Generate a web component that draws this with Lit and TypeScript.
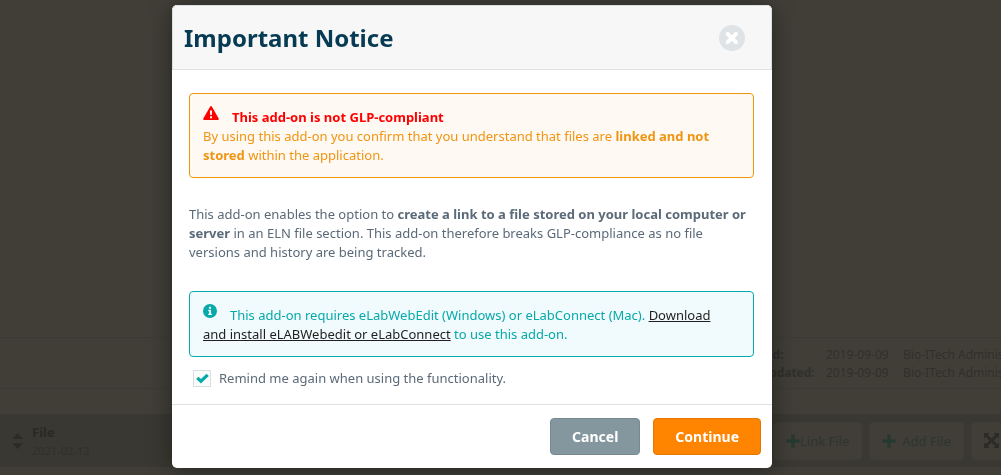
import { LitElement, html, css } from "lit";
import { customElement, state } from "lit/decorators.js";

const plus = html`<svg class="plus" viewBox="0 0 14 14" aria-hidden="true">
  <path d="M5.4 0.5h3.2v4.9h4.9v3.2H8.6v4.9H5.4V8.6H.5V5.4h4.9z" />
</svg>`;

@customElement("record-page")
export class RecordPage extends LitElement {
  static styles = css`
    :host {
      display: flex;
      flex-direction: column;
      justify-content: flex-end;
      box-sizing: border-box;
      height: 100vh;
      padding-bottom: 8px;
      overflow: hidden;
      background: #403e37;
      color: #30302b;
      font: 13px/18px "Noto Sans", "Open Sans", sans-serif;
    }
    .meta {
      display: flex;
      justify-content: flex-end;
      border: solid #3c3a34;
      border-width: 1px 0;
      padding: 8px 0 6px;
      margin-bottom: 25px;
    }
    .meta-grid {
      display: grid;
      grid-template-columns: 93px 77px 98px;
      white-space: nowrap;
      font-size: 12px;
      margin: 0;
    }
    .meta-grid dt {
      font-weight: 700;
    }
    .meta-grid dd {
      margin: 0;
    }
    .section {
      display: flex;
      align-items: center;
      justify-content: space-between;
      height: 53px;
      background: #393832;
    }
    .info {
      display: flex;
      align-items: center;
      gap: 9px;
      padding-left: 12px;
    }
    .sort {
      width: 11px;
      height: 16px;
      fill: #2b2b27;
    }
    .name {
      margin: 0;
      font-size: 13px;
      line-height: 20px;
      font-weight: 700;
      color: #292925;
    }
    .date {
      margin: 0;
      font-size: 11px;
    }
    .tools {
      display: flex;
      gap: 7px;
      width: 228px;
    }
    .tool {
      display: flex;
      flex: none;
      align-items: center;
      justify-content: center;
      gap: 6px;
      height: 38px;
      padding: 0 12px;
      border: 1px solid #3d3c35;
      border-radius: 3px;
      background: #403e37;
      color: #2d3530;
      font: inherit;
    }
    .tight {
      gap: 0;
    }
    .plus {
      width: 14px;
      height: 14px;
      fill: #24392f;
    }
    .expand {
      width: 15px;
      height: 15px;
      fill: #2b2b27;
    }
  `;

  render() {
    return html`
      <div class="meta">
        <dl class="meta-grid">
          <dt>Created:</dt>
          <dd>2019-09-09</dd>
          <dd>Bio-ITech Administrator</dd>
          <dt>Last updated:</dt>
          <dd>2019-09-09</dd>
          <dd>Bio-ITech Administrator</dd>
        </dl>
      </div>
      <section class="section">
        <div class="info">
          <svg class="sort" viewBox="0 0 11 16" aria-hidden="true">
            <path d="M5.5 0 11 6H0zM0 10h11l-5.5 6z" />
          </svg>
          <div>
            <h2 class="name">File</h2>
            <p class="date">2021-02-12</p>
          </div>
        </div>
        <div class="tools">
          <button class="tool tight">${plus}Link File</button>
          <button class="tool">${plus}Add File</button>
          <button class="tool" aria-label="Expand">
            <svg class="expand" viewBox="0 0 15 15" aria-hidden="true">
              <path
                d="M0 0h5.500L3.900 1.900 7.500 5.400l3.600-3.500L9.500 0H15v5.500l-1.900-1.600-3.500 3.600 3.500 3.600L15 9.500V15H9.500l1.600-1.900L7.500 9.600l-3.600 3.500L5.500 15H0V9.500l1.900 1.600 3.500-3.600-3.500-3.600L0 5.500z"
              />
            </svg>
          </button>
        </div>
      </section>
    `;
  }
}

@customElement("notice-dialog")
export class NoticeDialog extends LitElement {
  @state() private remind = true;

  static styles = css`
    :host {
      display: block;
      width: 600px;
      max-width: 100%;
      border-radius: 5px;
      overflow: hidden;
      background: #fff;
      color: #5b6a78;
      box-shadow: 0 3px 24px rgba(0, 0, 0, 0.4);
      font: 13px/19px "Noto Sans", "Open Sans", sans-serif;
    }
    .header {
      display: flex;
      align-items: center;
      justify-content: space-between;
      height: 63px;
      padding: 0 26px 0 11px;
      border: 1px solid #dcdfe0;
      border-bottom-color: #dfe1e3;
      border-radius: 5px 5px 0 0;
      background: #f7f7f7;
    }
    .title {
      margin: 0;
      color: #063b53;
      font-size: 24px;
      line-height: 34px;
      font-weight: 700;
    }
    .close {
      display: block;
      padding: 0;
      border: 0;
      background: none;
    }
    .close-icon {
      display: block;
      width: 26px;
      height: 26px;
    }
    .body {
      padding: 23px 18px 16px 17px;
    }
    .box {
      padding: 14px 24px 12px 13px;
      border: 1px solid;
      border-radius: 4px;
    }
    .warning {
      border-color: #f09609;
      background: #fff9f3;
      color: #f09412;
    }
    .tip {
      border-color: #07abab;
      background: #f1fafc;
      color: #07a9a9;
    }
    .alert {
      color: #f00;
    }
    .glyph {
      width: 16px;
      height: 14px;
      margin: -6px 13px 0 0;
      vertical-align: 2px;
      fill: currentColor;
    }
    .round {
      width: 14px;
    }
    .text {
      margin: 27px 0 29px;
    }
    .link {
      color: #1f1f1f;
    }
    .remind {
      display: flex;
      align-items: center;
      gap: 8px;
      margin: 12px 0 0 4px;
    }
    .tick {
      display: grid;
      place-items: center;
    }
    .tick > * {
      grid-area: 1 / 1;
    }
    .input {
      appearance: none;
      width: 18px;
      height: 17px;
      margin: 0;
      border: 1px solid #d9dee2;
      background: #fafbfb;
    }
    .mark {
      width: 13px;
      height: 11px;
      fill: #07a9a9;
      pointer-events: none;
    }
    .footer {
      display: flex;
      justify-content: flex-end;
      gap: 13px;
      padding: 13px 11px;
      border-top: 1px solid #dfe1e3;
    }
    .button {
      height: 37px;
      padding: 0 21px;
      border: 1px solid;
      border-radius: 4px;
      color: #fff;
      font: 700 14px/19px "Noto Sans", "Open Sans", sans-serif;
    }
    .cancel {
      border-color: #748990;
      background: #84979f;
    }
    .continue {
      border-color: #e57600;
      background: #ff8400;
    }
  `;

  render() {
    return html`
      <header class="header">
        <h1 class="title">Important Notice</h1>
        <button class="close" aria-label="Close">
          <svg class="close-icon" viewBox="0 0 26 26" aria-hidden="true">
            <circle cx="13" cy="13" r="13" fill="#dfe3e6" />
            <path d="M8.600 8.800l8.400 8.400m0-8.400l-8.400 8.400" stroke="#fff" stroke-width="4" stroke-linecap="round" />
          </svg>
        </button>
      </header>
      <div class="body">
        <div class="box warning">
          <svg class="glyph alert" viewBox="0 0 16 14" aria-hidden="true">
            <path
              fill-rule="evenodd"
              d="M7.200.5q.8-1 1.600 0l6.900 12.100q.4 1.200-.8 1.400H1.100q-1.200-.2-.8-1.400zM6.900 4.500l.3 4.500h1.600l.3-4.500zM7 10.300v2h2v-2z"
            />
          </svg><strong class="alert">This add-on is not GLP-compliant</strong><br />
          By using this add-on you confirm that you understand that files are
          <strong>linked and not stored</strong> within the application.
        </div>
        <p class="text">
          This add-on enables the option to
          <strong>create a link to a file stored on your local computer or server</strong>
          in an ELN file section. This add-on therefore breaks GLP-compliance as no file versions
          and history are being tracked.
        </p>
        <div class="box tip">
          <svg class="glyph round" viewBox="0 0 14 14" aria-hidden="true">
            <path
              fill-rule="evenodd"
              d="M7 0a7 7 0 1 0 0 14A7 7 0 0 0 7 0zM6 2.800h2v1.900H6zM5.200 5.800H8v3.900h.9v1.400H5.200V9.700h.9V7.200h-.9z"
            />
          </svg>This add-on requires eLabWebEdit (Windows) or eLabConnect (Mac).
          <a class="link" href="#">Download and install eLABWebedit or eLabConnect</a> to use this
          add-on.
        </div>
        <label class="remind">
          <span class="tick">
            <input
              class="input"
              type="checkbox"
              .checked=${this.remind}
              @change=${(e: Event) => (this.remind = (e.target as HTMLInputElement).checked)}
            />
            ${this.remind
              ? html`<svg class="mark" viewBox="0 0 13 11" aria-hidden="true">
                  <path d="M.2 5.900 2.400 3.700l2.500 2.400L10.600.8l2.200 2.200-7.900 7.500z" />
                </svg>`
              : ""}
          </span>
          Remind me again when using the functionality.
        </label>
      </div>
      <footer class="footer">
        <button class="button cancel">Cancel</button>
        <button class="button continue">Continue</button>
      </footer>
    `;
  }
}

@customElement("app-root")
export class AppRoot extends LitElement {
  static styles = css`
    :host {
      display: block;
    }
    .overlay {
      position: fixed;
      inset: 0;
      display: flex;
      align-items: flex-start;
      justify-content: center;
      padding: 5px 57px 0 0;
    }
  `;

  render() {
    return html`
      <record-page></record-page>
      <div class="overlay" role="dialog" aria-modal="true">
        <notice-dialog></notice-dialog>
      </div>
    `;
  }
}
